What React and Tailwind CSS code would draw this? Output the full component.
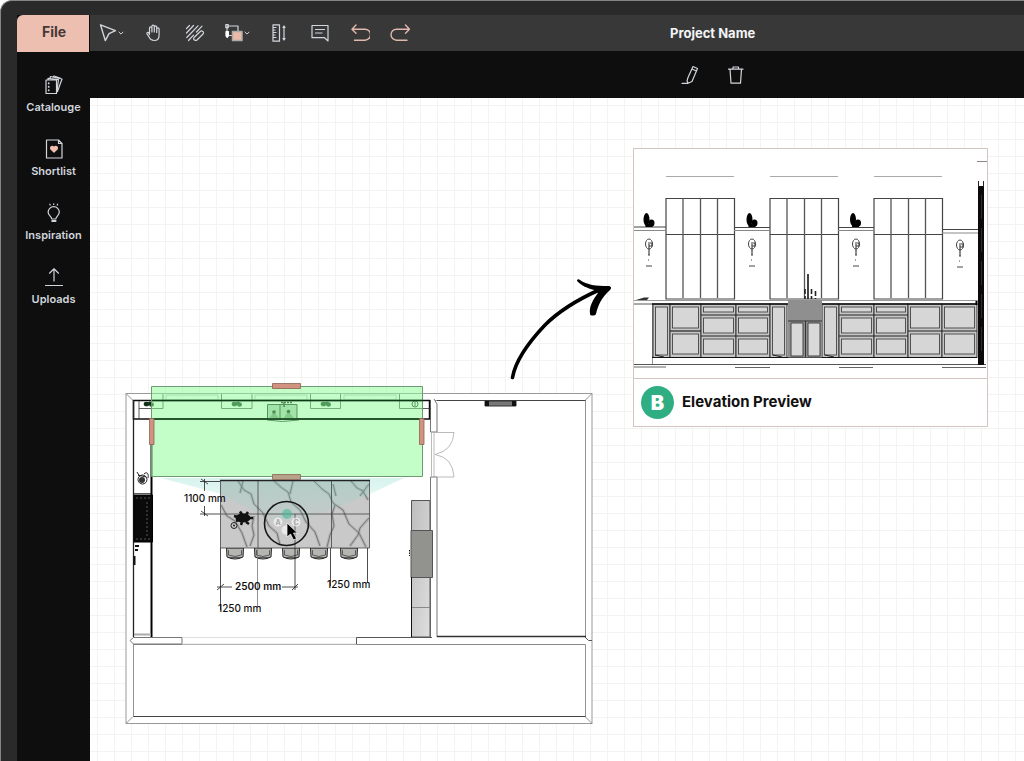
import { Fragment } from 'react'

// ---------------------------------------------------------------------------
// Icons
// ---------------------------------------------------------------------------
function Icon({ children, size = 'size-5', className = 'text-gray-300' }) {
  return (
    <svg
      viewBox="0 0 20 20"
      className={`${size} ${className} shrink-0`}
      fill="none"
      stroke="currentColor"
      strokeWidth="1.2"
      strokeLinecap="round"
      strokeLinejoin="round"
      aria-hidden="true"
    >
      {children}
    </svg>
  )
}

function Chevron() {
  return (
    <svg viewBox="0 0 6 4" className="h-1 w-1.5 shrink-0 text-gray-300" fill="none" stroke="currentColor" aria-hidden="true">
      <path d="M.7.8 3 3.1 5.3.8" />
    </svg>
  )
}

const PointerIcon = () => (
  <Icon><path d="M2.500 1.800 17.500 7.600 11 10.600 7.300 17.600Z" strokeWidth="1.400" /></Icon>
)

const HandIcon = () => (
  <Icon>
    <path d="M6.500 11V5a1.200 1.200 0 0 1 2.400 0v4M8.900 9V3.400a1.200 1.200 0 0 1 2.400 0V9M11.300 9V4a1.200 1.200 0 0 1 2.400 0v5.500M13.700 9V6a1.200 1.200 0 0 1 2.400 0v6.200c0 3.400-1.900 5.300-4.900 5.300-2.700 0-4.300-1.300-5.200-3.700L4 10.800c-.5-1.300 1-1.900 1.700-.9l.8 1.600" />
  </Icon>
)

const HatchIcon = () => (
  <Icon>
    <path d="M1.500 5.500 4.500 2.500M1.500 10 8.500 2.500M1.800 14.500 13 2.800M3.500 17.500l5-5.300M11.500 9 17 3.200" />
    <path d="m9 14.500 6-5.800c1.800-1.800 4.800.2 3 2.300l-6 6c-1.500 1.200-4.500-.5-3-2.500Z" />
  </Icon>
)

const ShapeFillIcon = () => (
  <Icon>
    <path d="M3 3h11v5M3 3v8M3 12.500h5" />
    <path d="M1.800 1.700h2.500v3H1.800z" />
    <path d="M2 8.500h2.400V13L3.200 14.500 2 13Z" fill="#fff" stroke="#fff" />
    <path d="M8.500 8.500H18v9H8.500z" fill="#edb9a9" stroke="#aaa" strokeWidth="1.500" />
  </Icon>
)

const RulerIcon = () => (
  <Icon>
    <path d="M4 1.800h6.500v16.400H4zM4 4.500h3M4 7h2M4 9.500h3M4 12h2M4 14.500h3M15 4v12" />
    <path d="m14 4.500 1-1.500 1 1.500ZM14 15.500l1 1.500 1-1.500Z" />
  </Icon>
)

const CommentIcon = () => (
  <Icon><path d="M2 2.500h16V18l-3.500-3.300H2zM5.500 6.500h9M5.500 10h6.500" /></Icon>
)

const UndoIcon = () => (
  <Icon className="text-[#e2b9ae]"><path d="M6 2 2 6.200l4 4M2.200 6.200H15a5.300 5.300 0 0 1 0 11H4.500" strokeWidth="1.400" /></Icon>
)

const RedoIcon = () => (
  <Icon className="text-[#e2b9ae]"><path d="m15.500 2 4 4.200-4 4M19.300 6.200H6.500a5.300 5.300 0 0 0 0 11H17" strokeWidth="1.400" /></Icon>
)

const CatalogueIcon = () => (
  <Icon>
    <path d="M2 5h10.500v13.500H2zM4 5V3.300L14.500 4.500 12.800 17M6 3.300 6.500 1.500 18 4l-4.500 12.500M9 2l1-1 6 2" />
    <path d="M4.700 8v.5M4.700 11.500v.5M4.700 15v.5" strokeWidth="1.700" />
  </Icon>
)

const ShortlistIcon = () => (
  <Icon>
    <path d="M2.500 1h12L18 4.500V19H2.500zM14.500 1v3.500H18" />
    <path d="M10 13.200 6.800 10C5.700 7.800 8.800 6.200 10 8.500c1.200-2.300 4.300-.7 3.200 1.500Z" fill="#f0bfb0" stroke="#f0bfb0" />
  </Icon>
)

const BulbIcon = () => (
  <Icon>
    <path d="M7.800 16c0-2.500-3.700-3.500-3.700-6.700a5.600 5.600 0 0 1 11.200 0c0 3.200-3.500 4.200-3.500 6.700ZM9.700.8v.7M5.800 1.200l.4.800M13.600 1.200l-.4.800" />
    <path d="M8.300 18h3.200" strokeWidth="2.200" />
  </Icon>
)

const UploadIcon = () => (
  <Icon><path d="M10 14V2M5.500 6.200 10 1.800l4.500 4.400M1.500 18.500h17" /></Icon>
)

const PencilIcon = () => (
  <Icon><path d="m8 12.500 5-11 4.500 2-5.500 13-4 1.800-1-2.500ZM12 4l4.500 2M2 18.300h6" /></Icon>
)

const TrashIcon = () => (
  <Icon><path d="M2.500 4.200h14.500M7 4V2h5.500v2M4 4.200l1 14h9.500l1-14" /></Icon>
)

// ---------------------------------------------------------------------------
// Toolbar + sidebar data
// ---------------------------------------------------------------------------
const TOOLS = [
  { label: 'Select', icon: PointerIcon, menu: true, width: 'w-[42px]' },
  { label: 'Pan', icon: HandIcon, width: 'w-[42px]' },
  { label: 'Hatch', icon: HatchIcon, width: 'w-[42px]' },
  { label: 'Shape fill', icon: ShapeFillIcon, menu: true, width: 'w-[42px]' },
  { label: 'Measure', icon: RulerIcon, width: 'w-[42px]' },
  { label: 'Comment', icon: CommentIcon, width: 'w-10' },
  { label: 'Undo', icon: UndoIcon, width: 'w-10' },
  { label: 'Redo', icon: RedoIcon, width: 'w-10' },
]

const NAV = [
  { label: 'Catalouge', icon: CatalogueIcon },
  { label: 'Shortlist', icon: ShortlistIcon },
  { label: 'Inspiration', icon: BulbIcon },
  { label: 'Uploads', icon: UploadIcon },
]

function Sidebar() {
  return (
    <aside className="flex w-[73px] shrink-0 flex-col bg-[#0e0e0e]">
      <button type="button" className="mr-px h-[37px] rounded-tl-md bg-[#edbfb1] pb-1 pl-0.5 text-sm font-bold text-[#443936]">
        File
      </button>
      <nav className="mt-[23px] flex flex-col gap-6">
        {NAV.map(({ label, icon: NavIcon }) => (
          <button key={label} type="button" className="flex h-10 flex-col items-center justify-between text-[11px] leading-4 font-semibold text-gray-300">
            <NavIcon />
            {label}
          </button>
        ))}
      </nav>
    </aside>
  )
}

function Toolbar() {
  return (
    <header className="grid h-9 grid-cols-3 items-center bg-[#383838]">
      <div className="flex h-full">
        {TOOLS.map(({ label, icon: ToolIcon, menu, width }) => (
          <button key={label} type="button" aria-label={label} className={`${width} flex shrink-0 items-center justify-center`}>
            <ToolIcon />
            {menu && <Chevron />}
          </button>
        ))}
      </div>
      <h1 className="col-span-2 text-center text-[13px] leading-4 font-bold text-gray-100">Project Name</h1>
    </header>
  )
}

function ActionBar() {
  return (
    <div className="grid h-[47px] grid-cols-3 items-center bg-[#0e0e0e]">
      <div className="col-span-2 col-start-2 flex justify-center gap-[26px]">
        <button type="button" aria-label="Edit"><PencilIcon /></button>
        <button type="button" aria-label="Delete"><TrashIcon /></button>
      </div>
    </div>
  )
}

// ---------------------------------------------------------------------------
// Floor plan
// ---------------------------------------------------------------------------
const CHAIRS = [235, 263, 291, 319, 349]

const VEINS = [
  'M238 481l6 9 7 4 3 10 9 9 6 13 8 7 3 12',
  'M274 481l8 7 6 4 3 10 9 8 6 12 9 10 5 14',
  'M314 481l8 8 7 5 4 9 10 7 6 14 10 9 7 14',
  'M351 481l6 7 6 3 5 9',
  'M221 505l6 11 8 5 7 12 5 14',
  'M327 547l3-12 4-9-2-12 3-9',
  'M250 546l4-11-2-9 2-10',
  'M350 546l8-11 2-7 9-10',
  'M243 481l-3 12M293 481l-3 13M333 484l3 12M369 484l-9 12',
]

function Burner({ x, y }) {
  return (
    <g fill="#12301a" stroke="none">
      <ellipse cx={x - 2.5} cy={y} rx="2.800" ry="2.300" />
      <ellipse cx={x + 1} cy={y - 1} rx="2" ry="1.500" />
      <ellipse cx={x + 2.5} cy={y + .5} rx="2.500" ry="2.300" />
    </g>
  )
}

function FloorPlan() {
  return (
    <svg viewBox="120 378 480 352" className="absolute top-[280px] left-[30px] w-[480px]" fill="none" role="img" aria-label="Kitchen floor plan">
      <defs>
        <linearGradient id="beam" x1="0" y1="0" x2="0" y2="1">
          <stop offset="0" stopColor="#7cd9c4" stopOpacity=".3" />
          <stop offset="1" stopColor="#7cd9c4" stopOpacity=".05" />
        </linearGradient>
        <linearGradient id="steel" x1="0" y1="0" x2="1" y2="1">
          <stop offset="0" stopColor="#bdbdbd" />
          <stop offset="1" stopColor="#dedede" />
        </linearGradient>
      </defs>

      {/* walls */}
      <path d="M126 393.500h466v330H126z" fill="#fff" stroke="#999" />
      <path d="M133.500 400.500h452v316h-452zM126 393.500l7 7M592 393.500l-7 7M126 723.500l7-7M592 723.500l-7-7" stroke="#777" strokeWidth=".8" />
      <path d="M134 637h452v7.500H134z" fill="#fff" />
      <path d="M133.500 644.500h452" stroke="#888" />
      <path d="M133.500 637.500H182v6.500h-48.500l-3.500-3.500 3.500-3" fill="#fff" stroke="#777" />
      <path d="M182 637.500h174.500M182 644h174.500" stroke="#ddd" />
      <path d="M356.500 644V637.500H432M585 637l3.500 3.500h3.500" stroke="#555" />
      <path d="M430.500 400v32H437V404l-3-5M430.500 637V477H437v160" fill="#fff" stroke="#777" />
      <path d="M437 636.500h149" stroke="#333" strokeWidth="1.300" />
      <path d="M437 400.500h148.500M133.500 716.500h452" stroke="#444" />
      <path d="M431.500 432v45M434 432v45M436 432.500h18q-1 18-19 22 18 3 19 22.500h-18" stroke="#aaa" strokeWidth=".8" />
      <path d="M485 401h31v5h-31z" fill="#777" stroke="#333" />
      <path d="M485 401h4v5h-4zM512 401h4v5h-4z" fill="#111" />

      {/* run of units under the window */}
      <path d="M133.500 400.500h296v18.500h-296z" stroke="#111" strokeWidth="1.500" />
      <path d="M151.500 419v218" stroke="#000" strokeWidth="2" />
      <path d="M133.500 400v237" stroke="#222" strokeWidth="1.300" />
      <path d="M139 401v18M139 408.500h24V394M134 493.500h17M221.500 394v14.500h30.500V394M310.500 394v14.500h30V394M399.500 394v14.500h31.500" stroke="#333" strokeWidth=".8" />
      <path d="M166 395h52v5h-52zM255 395h52v5h-52zM344 395h52v5h-52z" stroke="#999" strokeWidth=".6" />
      <path d="M267.500 404.500h29.500V419h-29.500zM280 404.500V419" fill="#b9c9b9" stroke="#222" />
      <path d="M281 402.500h11M284 402v6" stroke="#111" strokeWidth="1.500" strokeDasharray="2 1" />
      <path d="m274 412 5 6h-10zM288 411l6 7h-10z" fill="#789378" />
      <circle cx="274" cy="412" r="1.800" fill="#111" />
      <circle cx="288.500" cy="411.500" r="1.800" fill="#111" />
      <path d="M267 420q15 3 32 0" stroke="#333" />
      <Burner x={149} y={404} />
      <Burner x={237} y={404} />
      <Burner x={326} y={404} />
      <circle cx="415" cy="404" r="3" stroke="#222" />
      <path d="M415 402v4" stroke="#222" />

      {/* left wall: kettle, range, cabinets */}
      <circle cx="142.500" cy="479.500" r="4.500" stroke="#222" />
      <circle cx="142" cy="480" r="3" fill="#333" />
      <path d="M137 472l3 5M144 474c3-3 5 0 4 4M138 475l8 2" stroke="#222" />
      <path d="M134 495h18.500v47H134z" fill="#0a0a0a" stroke="#000" />
      <path d="M136 498h14M136 539h14M147 502v34" stroke="#777" strokeWidth=".7" strokeDasharray="2 2" />
      <path d="M135 545h4v2h-4zM135 549h3v2h-3zM133.500 556h2v9h-2z" fill="#111" />
      <path d="M134 634.500h17" stroke="#aaa" strokeWidth="2" />

      {/* tall units on the right wall */}
      <path d="M411.500 500.500H430V637h-18.500z" fill="url(#steel)" stroke="#555" />
      <path d="M411 530.500h21.500v47H411z" fill="#92928f" stroke="#555" />
      <path d="M411.500 607.500H430" stroke="#888" />
      <path d="M411.500 577v60" stroke="#111" />
      <path d="M409.500 550v6" stroke="#111" strokeDasharray="1.500 1" />

      {/* stools */}
      {CHAIRS.map(x => (
        <Fragment key={x}>
          <path d={`M${x - 8.5} 548h17l-.5 9q-8 4-16 0z`} fill="#b5b5b2" stroke="#222" />
          <path d={`M${x - 6.5} 550v5q6.500 3 13 0v-5M${x - 6} 557.500h12`} stroke="#333" strokeWidth=".7" />
        </Fragment>
      ))}

      {/* island */}
      <path d="M220.500 480.500h149V548h-149z" fill="#c9c9c9" />
      {VEINS.map(d => (
        <Fragment key={d}>
          <path d={d} stroke="#8d8d8d" strokeWidth="3" strokeLinejoin="round" opacity=".35" />
          <path d={d} stroke="#666" strokeWidth=".8" strokeLinejoin="round" />
        </Fragment>
      ))}
      <path d="M161 478h243l-34 16-70 28h-26l-53-28Z" fill="url(#beam)" />
      <path d="M220.500 480.500h149V548h-149zM220.500 514h149M258 480.500V548M295 514v34M331.500 480.500V548" stroke="#444" strokeWidth=".8" />
      <path d="M220 480.500h150" stroke="#222" strokeWidth="1.500" />
      <ellipse cx="243" cy="518" rx="7.500" ry="4.500" fill="#111" />
      <path d="M234 516l4 1M240 511.500l2 3M248 512l-2 3M253 518h-4M249 524l-3-2M241 525l1-3M236 521l3-1" stroke="#111" strokeWidth="2.500" />
      <circle cx="234" cy="525.500" r="3" stroke="#222" />
      <circle cx="234" cy="525.500" r="1" fill="#222" />

      {/* selected elevation */}
      <path d="M151.500 386.500h271v90h-271z" fill="#8cfd98" fillOpacity=".52" stroke="#6d9a72" />
      <path d="M152 400.500h271M152 419h271" stroke="#0d3a14" strokeWidth="1.300" />
      <g fill="#d1937f" stroke="#8a6254" strokeWidth=".8">
        <path d="M272.500 383.500h28v5h-28zM149.500 418.500h4.500v26h-4.500zM419.500 418.500h4.500v26h-4.500z" />
        <path d="M272.500 474.500h28v5h-28z" fill="#b6a288" />
      </g>

      {/* dimensions */}
      <g stroke="#222" strokeWidth=".8">
        <path d="M200 481.500h20M200 514h20M204.500 479v12M204.500 506v10M201 479l7 5M201 511l7 5" />
        <path d="M220.500 548v62M295 548v42M330.500 548v38M367.500 548v34" />
        <path d="M257.500 548v60" stroke="#777" />
        <path d="M217 587h15M282 587h16M217 590l7-6M292 590l6-6" />
      </g>
      <g fill="#111" className="text-[10px] font-medium">
        <text x="184" y="502">1100 mm</text>
        <text x="235" y="590" className="font-semibold">2500 mm</text>
        <text x="218" y="612">1250 mm</text>
        <text x="327" y="588">1250 mm</text>
      </g>

      {/* view picker */}
      <circle cx="286.500" cy="523.500" r="22" stroke="#161616" strokeWidth="1.600" />
      <circle cx="287" cy="514" r="5" fill="#48b99a" opacity=".6" />
      <g fill="#fff" fillOpacity=".6">
        <circle cx="278" cy="522" r="4.500" />
        <circle cx="296" cy="522" r="4.500" />
        <circle cx="286" cy="530" r="4.500" />
      </g>
      <g fill="#aaa" textAnchor="middle" className="text-[7px] font-bold">
        <text x="278" y="525">A</text>
        <text x="296" y="525">C</text>
      </g>
      <path d="M287 523v14l3.500-3 3 6 3-1.500-3-5.500h4Z" fill="#000" stroke="#fff" strokeWidth=".7" />
    </svg>
  )
}

// ---------------------------------------------------------------------------
// Elevation preview
// ---------------------------------------------------------------------------
const WINDOWS = [666, 770, 874]

const UNITS = [
  { x: 653, w: 17, type: 'tall' },
  { x: 670, w: 31, type: 'double' },
  { x: 701, w: 35, type: 'drawers' },
  { x: 736, w: 34, type: 'drawers' },
  { x: 770, w: 17, type: 'tall' },
  { x: 822, w: 17, type: 'tall' },
  { x: 839, w: 35, type: 'drawers' },
  { x: 874, w: 34, type: 'drawers' },
  { x: 908, w: 34, type: 'double' },
  { x: 942, w: 35, type: 'double' },
]

// [top, height] of each front
const FRONTS = {
  tall: [[307, 48]],
  double: [[307, 21], [334, 20]],
  drawers: [[307, 5], [318, 15], [339, 15]],
}

const RAILS = { tall: [], double: [331], drawers: [315, 336] }

function BaseUnit({ x, w, type }) {
  return (
    <>
      <rect x={x} y="304" width={w} height="53.500" fill="#c6c6c6" stroke="#333" />
      {RAILS[type].map(y => <path key={y} d={`M${x} ${y}h${w}`} stroke="#222" strokeWidth="1.200" />)}
      {FRONTS[type].map(([y, h]) => (
        <rect key={y} x={x + 2.5} y={y} width={w - 5} height={h} fill="#d6d6d6" stroke="#444" strokeWidth=".9" />
      ))}
    </>
  )
}

function ElevationDrawing() {
  return (
    <svg viewBox="634 149 353 229" className="block w-full" fill="none" role="img" aria-label="Kitchen elevation">
      {WINDOWS.map(x => (
        <g key={x} stroke="#444">
          <path d={`M${x} 176.500h68`} stroke="#aaa" />
          <path d={`M${x} 198.500h68.500V299H${x}zM${x} 234.500h68`} strokeWidth="1.200" />
          <path d={`M${x + 17} 198v100M${x + 34.5} 198v100M${x + 51.5} 198v100`} stroke="#555" strokeWidth="1.300" />
        </g>
      ))}
      <path d="M634 227h32M734 227.500h36M838 227.500h36M942 229.500h36" stroke="#444" />
      <path d="M634 230.500h32M734 230.500h36M838 230.500h36M942 233h36M977 161.500h10" stroke="#888" />

      {/* vases */}
      {[646.500, 749.500, 853].map(x => (
        <g key={x} fill="#000">
          <ellipse cx={x} cy="219.500" rx="3" ry="6.500" />
          <ellipse cx={x + 5} cy="223" rx="3" ry="3.500" />
          <path d={`M${x - 1} 224h7v3h-7z`} />
        </g>
      ))}

      {/* wall lights */}
      {[[649, 244], [752, 244], [856, 244], [960, 245]].map(([x, y]) => (
        <g key={x} stroke="#444">
          <ellipse cx={x} cy={y} rx="3.500" ry="5" />
          <path d={`M${x} ${y}v11M${x - 1} ${y - 1}h4v3h-3`} strokeWidth="1.200" />
          <path d={`M${x - 1} ${y + 11}h2M${x - 1} ${y + 16}h1M${x - 3} ${y + 22}h6`} />
        </g>
      ))}

      {/* worktop */}
      <path d="M634 300.500h344" stroke="#999" />
      <path d="M634 304h19" stroke="#555" />
      <path d="M636 300 644 297.500h5L647 300Z" fill="#333" />
      <path d="M652.500 304v60" stroke="#777" strokeWidth=".8" />
      {UNITS.map(unit => <BaseUnit key={unit.x} {...unit} />)}
      <path d="M652 304h325" stroke="#111" strokeWidth="1.500" />
      <path d="M652 357.500h325" stroke="#111" />
      <path d="m655 355 9 2M773 355l9 2M825 355l9 2" stroke="#222" />

      {/* sink and tap */}
      <path d="M788 300h34v57.500h-34z" fill="#8f8f8f" />
      <path d="M788 321h34M805.500 321v36" stroke="#333" />
      <path d="M791 323h12v33h-12zM808 323h12v33h-12z" fill="#d9d9d9" stroke="#444" />
      <path d="M808 274v25" stroke="#222" strokeWidth="1.700" />
      <path d="M805 289v10M811.500 289v10M815.500 291v8" stroke="#222" strokeWidth="1.600" strokeDasharray="5 2" />

      {/* floor lines */}
      <path d="M634 364.500h352" stroke="#555" />
      <path d="M634 367h32M735 367.500h35M839 367.500h34M942 367.500h44" stroke="#666" />

      {/* tall unit on the right edge */}
      <path d="M978 186h6v179h-6z" fill="#0a0a0a" />
      <path d="M978.500 181v6M983.500 181v6" stroke="#222" />
      <path d="M981.500 195v162" stroke="#444" strokeWidth=".6" strokeDasharray="24 9" />
      <path d="M976.500 301v4" stroke="#000" strokeWidth="2" />
    </svg>
  )
}

function ElevationPreview() {
  return (
    <figure className="absolute top-[50px] left-[543px] w-[355px] border border-[#d5c5c0] bg-white">
      <ElevationDrawing />
      <figcaption className="flex h-12 items-center gap-2 border-t border-[#d5c5c0] px-[7px]">
        <span className="flex size-[33px] items-center justify-center rounded-full bg-[#2fae84] text-xl font-black text-white">B</span>
        <span className="text-[15px] font-bold text-[#111]">Elevation Preview</span>
      </figcaption>
    </figure>
  )
}

function LinkArrow() {
  return (
    <svg viewBox="505 275 110 110" className="absolute top-[177px] left-[415px] w-[110px]" fill="none" aria-hidden="true">
      <path d="M512.500 377.500C515 363 527 344 545 325c16-16 34-26 54-35" stroke="#000" strokeWidth="3.600" strokeLinecap="round" />
      <path d="M577 281c0-2 2-2 3-1 7 5 16 6 28 6 3 0 4 2 2 4-8 7-12 15-14 24-1 2-6 2-6 0-1-8 3-14 8-21l-4-3c-7-2-12-4-17-9Z" fill="#000" />
    </svg>
  )
}

function Canvas() {
  return (
    <section
      aria-label="Canvas"
      className="relative min-h-[640px] flex-1 overflow-hidden bg-white bg-[linear-gradient(to_right,#f3f3f2_1px,transparent_1px),linear-gradient(to_bottom,#f3f3f2_1px,transparent_1px)] bg-[size:17px_17px] bg-position-[7px_7px]"
    >
      <FloorPlan />
      <LinkArrow />
      <ElevationPreview />
    </section>
  )
}

// ---------------------------------------------------------------------------
// Main
// ---------------------------------------------------------------------------
export default function App() {
  return (
    <div className="bg-white font-[Inter,sans-serif]">
      <div className="flex min-h-screen rounded-tl-xl border-t border-l border-[#858585] bg-[#2a2a2a] pt-3.5 pl-4">
        <Sidebar />
        <main className="flex min-w-0 flex-1 flex-col">
          <Toolbar />
          <ActionBar />
          <Canvas />
        </main>
      </div>
    </div>
  )
}
